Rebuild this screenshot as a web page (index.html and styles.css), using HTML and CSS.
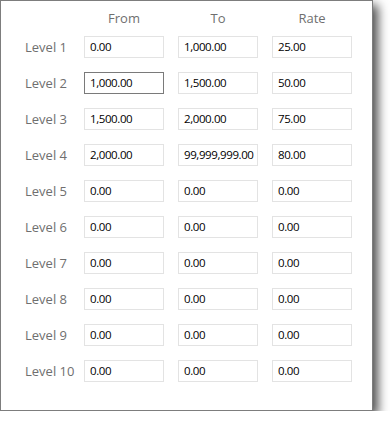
FILE: index.html
```html
<!DOCTYPE html>
<html>
<head>
<meta charset="utf-8">
<link rel="stylesheet" href="styles.css">
</head>
<body>
<div class="window">
  <div class="head">
    <span></span>
    <span class="col-title">From</span>
    <span class="col-title">To</span>
    <span class="col-title">Rate</span>
  </div>
  <div class="levels">
    <span class="lvl">Level 1</span><div class="field">0.00</div><div class="field">1,000.00</div><div class="field">25.00</div>
    <span class="lvl">Level 2</span><div class="field focus">1,000.00</div><div class="field">1,500.00</div><div class="field">50.00</div>
    <span class="lvl">Level 3</span><div class="field">1,500.00</div><div class="field">2,000.00</div><div class="field">75.00</div>
    <span class="lvl">Level 4</span><div class="field">2,000.00</div><div class="field">99,999,999.00</div><div class="field">80.00</div>
    <span class="lvl">Level 5</span><div class="field">0.00</div><div class="field">0.00</div><div class="field">0.00</div>
    <span class="lvl">Level 6</span><div class="field">0.00</div><div class="field">0.00</div><div class="field">0.00</div>
    <span class="lvl">Level 7</span><div class="field">0.00</div><div class="field">0.00</div><div class="field">0.00</div>
    <span class="lvl">Level 8</span><div class="field">0.00</div><div class="field">0.00</div><div class="field">0.00</div>
    <span class="lvl">Level 9</span><div class="field">0.00</div><div class="field">0.00</div><div class="field">0.00</div>
    <span class="lvl">Level 10</span><div class="field">0.00</div><div class="field">0.00</div><div class="field">0.00</div>
  </div>
</div>
</body>
</html>
```

FILE: styles.css
```css
html, body {
  margin: 0;
  padding: 0;
  background: #ffffff;
}
body {
  font-family: "Open Sans", "Noto Sans", sans-serif;
}
.window {
  box-sizing: border-box;
  width: 373px;
  height: 411px;
  border: 1px solid #7d7d7d;
  background: #ffffff;
  box-shadow: 5px 5px 10px rgba(0, 0, 0, 0.7);
  padding: 8px 0 0 24px;
  display: flex;
  flex-direction: column;
}
.head, .levels {
  display: grid;
  grid-template-columns: 45px 80px 80px 80px;
  column-gap: 14px;
}
.head {
  height: 18px;
  margin-bottom: 9px;
  align-items: center;
}
.col-title {
  text-align: center;
  font-size: 13px;
  color: #6f6f6f;
  line-height: 18px;
}
.levels {
  grid-auto-rows: 22px;
  row-gap: 14px;
  align-items: center;
}
.lvl {
  font-size: 13px;
  color: #6f6f6f;
  white-space: nowrap;
  line-height: 22px;
}
.field {
  box-sizing: border-box;
  height: 22px;
  border: 1px solid #e3e3e3;
  padding: 0 0 0 5px;
  font-size: 11.5px;
  letter-spacing: -0.4px;
  line-height: 20px;
  color: #000;
  white-space: nowrap;
  overflow: hidden;
}
.field.focus {
  border-color: #7a7a7a;
}
```
